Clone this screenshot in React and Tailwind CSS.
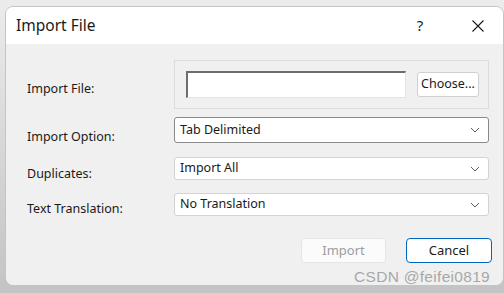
import React from "react";

const font = { fontFamily: '"Noto Sans", "Open Sans", Arial, sans-serif' };

function Chevron() {
  return (
    <svg width="10" height="6" viewBox="0 0 10 6" className="shrink-0">
      <path d="M1 1 L5 5 L9 1" fill="none" stroke="#5f5f5f" strokeWidth="1" />
    </svg>
  );
}

function Select({ value, dark, h }) {
  return (
    <div
      className={`flex items-center justify-between bg-white rounded-[3px] pl-[5px] pr-[8px] text-[12.5px] text-[#1a1a1a] border ${
        dark ? "border-[#8a8a8a]" : "border-[#d3d3d3]"
      } ${h}`}
    >
      <span className="leading-none">{value}</span>
      <Chevron />
    </div>
  );
}

function Label({ children, h }) {
  return (
    <div className={`flex items-center text-[12.5px] text-[#1a1a1a] ${h}`}>{children}</div>
  );
}

export default function App() {
  return (
    <div
      className="w-[504px] h-[293px] overflow-hidden relative bg-gradient-to-b from-[#ececec] to-[#c3c3c3]"
      style={font}
    >
      <div className="ml-[5px] mt-[6px] w-[499px] h-[280px] rounded-[8px] border border-[#c4c4c4] bg-[#f0f0f0] overflow-hidden flex flex-col">
        {/* Title bar */}
        <div className="h-[37px] bg-white flex items-center shrink-0">
          <div className="pl-[10px] text-[15.5px] text-[#1a1a1a] flex-1">Import File</div>
          <div className="w-[40px] text-center text-[15px] text-[#1a1a1a] mr-[18px]">?</div>
          <div className="w-[40px] flex justify-center mr-[5px]">
            <svg width="14" height="14" viewBox="0 0 14 14">
              <path d="M1.5 1.5 L12.5 12.5 M12.5 1.5 L1.5 12.5" stroke="#1a1a1a" strokeWidth="1.1" fill="none" />
            </svg>
          </div>
        </div>
        {/* Body */}
        <div className="flex pt-[16px] pl-[21px]">
          <div className="w-[147px] flex flex-col">
            <Label h="h-[49px] pt-[9px]">Import File:</Label>
            <Label h="h-[26px] mt-[8px] pt-[14px]">Import Option:</Label>
            <Label h="h-[23px] mt-[14px] pt-[11px]">Duplicates:</Label>
            <Label h="h-[23px] mt-[13px] pt-[10px]">Text Translation:</Label>
          </div>
          <div className="w-[315px] flex flex-col">
            <div className="h-[49px] border border-[#dcdcdc] flex items-center pl-[11px] pr-[9px]">
              <div className="w-[220px] h-[27px] bg-white border-t-2 border-l-2 border-t-[#6d6d6d] border-l-[#6d6d6d] border-b border-r border-b-[#e3e3e3] border-r-[#e3e3e3]" />
              <div className="flex-1" />
              <div className="w-[62px] h-[25px] bg-white border border-[#d0d0d0] rounded-[3px] flex items-center justify-center text-[12.5px] text-[#1a1a1a]">
                Choose...
              </div>
            </div>
            <div className="mt-[8px]">
              <Select value="Tab Delimited" dark h="h-[26px]" />
            </div>
            <div className="mt-[14px]">
              <Select value="Import All" h="h-[23px]" />
            </div>
            <div className="mt-[13px]">
              <Select value="No Translation" h="h-[23px]" />
            </div>
          </div>
        </div>
        {/* Buttons */}
        <div className="flex justify-end mt-[22px] pr-[11px] gap-[20px]">
          <div className="w-[85px] h-[25px] bg-[#fbfbfb] border border-[#e6e6e6] rounded-[4px] flex items-center justify-center text-[13px] text-[#9d9d9d]">
            Import
          </div>
          <div className="w-[86px] h-[25px] bg-white border border-[#0067c0] rounded-[4px] flex items-center justify-center text-[13px] text-[#1a1a1a]">
            Cancel
          </div>
        </div>
      </div>
      <div className="absolute left-[354px] top-[269px] text-[15.5px] text-[#a8a8a8] leading-none tracking-[0.3px]" style={{ fontFamily: '"Liberation Sans", Arial, sans-serif' }}>
        CSDN @feifei0819
      </div>
    </div>
  );
}
